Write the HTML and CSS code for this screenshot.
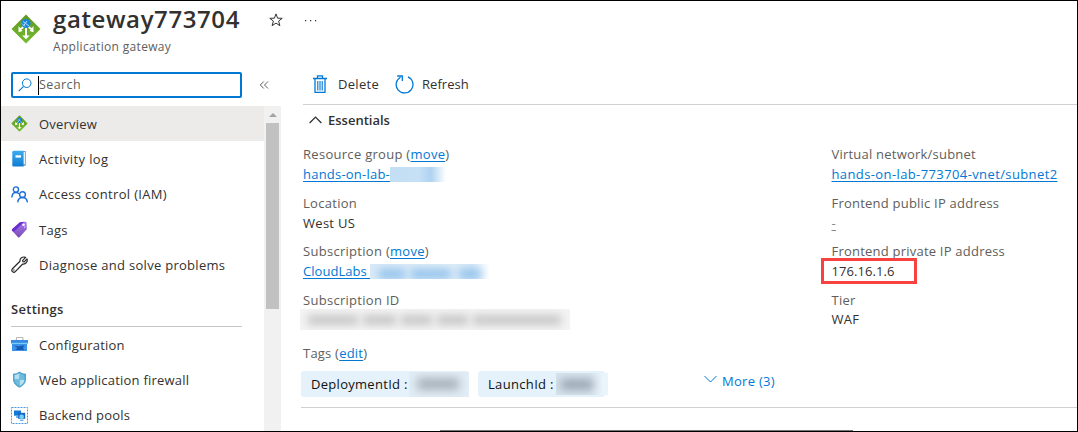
FILE: index.html
```html
<!DOCTYPE html>
<html lang="en">
<head>
<meta charset="utf-8">
<title>gateway773704 - Application gateway</title>
<link rel="stylesheet" href="styles.css">
</head>
<body>
<svg class="defs" width="0" height="0" aria-hidden="true">
  <defs>
    <linearGradient id="g-green" x1="0" y1="0" x2="0" y2="1"><stop offset="0" stop-color="#5e9624"/><stop offset="1" stop-color="#76bc2d"/></linearGradient>
    <linearGradient id="g-blue" x1="0" y1="0" x2="0" y2="1"><stop offset="0" stop-color="#3cabee"/><stop offset="1" stop-color="#0f7bd4"/></linearGradient>
    <linearGradient id="g-purple" x1="0" y1="0" x2="0" y2="1"><stop offset="0" stop-color="#a67af4"/><stop offset="1" stop-color="#7a4bb0"/></linearGradient>
    <symbol id="gateway" viewBox="0 0 30 30">
      <path d="M15 .5 29.500 15 15 29.500 .5 15Z" fill="url(#g-green)"/>
      <path d="M14 12h2v9.500h2.800L15 25.300l-3.800-3.800H14Z" fill="#fff"/>
      <path d="M12.500 12.500q-1.200 2.200-4 2.900M17.500 12.500q1.200 2.200 4 2.900" fill="none" stroke="#fff" stroke-width="1.700"/>
      <path d="M7.500 12v6.200l4-1.300ZM22.500 12v6.200l-4-1.300Z" fill="#fff"/>
      <circle cx="15" cy="9.500" r="4.600" fill="#1683dc"/>
      <path d="m12 7.500 6 4.500M12.500 12l3.500-5M11 9.500l3 3" stroke="#b8e1fc" stroke-width="1"/>
    </symbol>
  </defs>
</svg>
<div class="window">
  <header class="header">
    <svg class="header-icon"><use href="#gateway"/></svg>
    <div class="heading">
      <h1 class="title">gateway773704</h1>
      <p class="subtitle">Application gateway</p>
    </div>
    <svg class="star" viewBox="0 0 14 14"><path d="m7 .9 1.600 4.300 4.600.1-3.600 2.800 1.300 4.600L7 10.100l-3.900 2.600 1.300-4.600L.8 5.300l4.600-.1Z" fill="none" stroke="#323130"/></svg>
    <svg class="dots" viewBox="0 0 13 3"><path d="M1 1h1.200v1.200H1ZM6 1h1.200v1.200H6ZM11 1h1.200v1.200H11Z" fill="#323130"/></svg>
  </header>
  <div class="body">
    <aside class="sidebar">
      <div class="search-row">
        <div class="search">
          <svg class="search-icon" viewBox="0 0 14 14"><circle cx="8.700" cy="5.200" r="4.300" fill="none" stroke="#0078d4"/><path d="M5.600 8.300.7 13.200" stroke="#0078d4" stroke-width="1.100"/></svg>
          <span class="caret"></span><span class="placeholder">Search</span>
        </div>
        <svg class="collapse" viewBox="0 0 10 8"><path d="M4.800.5 1.300 4l3.500 3.500M9 .5 5.500 4 9 7.500" fill="none" stroke="#605e5c"/></svg>
      </div>
      <div class="nav-wrap">
        <nav class="nav">
          <a class="item active"><svg class="icon" viewBox="0 0 17 17"><use href="#gateway"/></svg><span class="ls-2">Overview</span></a>
          <a class="item"><svg class="icon" viewBox="0 0 17 17"><path d="M2.500 1h12v14.500h-12Z" fill="#155ea8"/><path d="M4 1.400h10v13.200H3Z" fill="#e8f3fb"/><path d="M1.300 2.200Q1.300.8 2.800.8h9.800v15.800H2.300q-1 0-1-1Z" fill="url(#g-blue)"/><path d="M4.500 5.300h5.500V7.600H4.500Z" fill="#fff"/></svg><span class="ls-4">Activity log</span></a>
          <a class="item"><svg class="icon" viewBox="0 0 17 17" fill="none" stroke="#1b6dda" stroke-width="1.400"><circle cx="4.900" cy="3.500" r="2.600"/><path d="M.9 11.500c.1-3 1.600-5 4-5 1.400 0 2.500.5 3.100 1.500"/><circle cx="11.500" cy="8.600" r="2.900"/><path d="M6.700 16.400c.3-3.100 2-4.900 4.800-4.900s4.600 1.800 4.900 4.900"/></svg><span class="ls-3">Access control (IAM)</span></a>
          <a class="item"><svg class="icon" viewBox="0 0 17 17"><path d="M1 8.200 8.800 1.300l5.400-.6q1.300 0 1.400 1.300l.2 6.200-7.300 8.100q-.7.500-1.400-.1L1.300 10q-.7-.9-.3-1.800Z" fill="url(#g-purple)"/><path d="m1 8.200 8-7 4.300-.5-9.800 9.500-1.500.4Q.3 9.300 1 8.200Z" fill="#6b2fd0"/><circle cx="12.500" cy="3.700" r="1.300" fill="#fff"/><path d="M13 4q1.800 1.500.3 3" fill="none" stroke="#d6bff7"/></svg><span>Tags</span></a>
          <a class="item"><svg class="icon" viewBox="0 0 17 17"><path d="M14.600 1.400 11.700 4.300l.2 1.300 1.300.2 2.800-2.900c1 2.900-1.300 5.600-4.300 5.100L4.300 15.600c-1.800 1.800-4.700-.9-2.900-2.800L9 5.300C8.500 2.300 11.500.1 14.600 1.400Z" fill="none" stroke="#2b2a29" stroke-width="1.200" stroke-linejoin="round"/><circle cx="2.900" cy="14" r=".7" fill="#323130"/></svg><span>Diagnose and solve problems</span></a>
          <h2 class="group">Settings</h2>
          <a class="item"><svg class="icon" viewBox="0 0 17 17"><path d="M5.500 4.500V2.200q0-.7.7-.7h5q.7 0 .7.700v2.300" fill="none" stroke="#b9b9b9" stroke-width="1.200"/><path d="M0 4h17v4H0Z" fill="#3789e5"/><path d="M1 8h15v7H1Z" fill="#3d92ea"/><path d="M0 6.800h17V8H0Z" fill="#78cef7"/><path d="m3 9.500 3.500.8H9l2-.8h2.500l-1.500 2 1 2.500H4l2.500-2Z" fill="#155cb2"/></svg><span class="ls-2">Configuration</span></a>
          <a class="item"><svg class="icon" viewBox="0 0 17 17"><path d="M8.500.5c2 1.600 4 2.100 6.500 2.200v5.300c0 4.200-3.100 7-6.500 8.700C5.100 15 2 12.200 2 8V2.700C4.500 2.600 6.500 2.100 8.500.5Z" fill="#48a4cf"/><path d="M8.500 2v6.500h-5v-4.600C5.500 3.700 7 3.200 8.500 2ZM8.500 8.500h5c0 3.200-2.300 5.300-5 6.700Z" fill="#b6dff0"/><path d="M8.500 2c1.500 1.200 3 1.700 5 1.900v4.600h-5ZM3.500 8.500h5v6.700c-2.700-1.400-5-3.500-5-6.700Z" fill="#6dbbdd"/></svg><span class="ls-2">Web application firewall</span></a>
          <a class="item"><svg class="icon" viewBox="0 0 17 17"><path d="M.5.500h16v16H.5Z" fill="none" stroke="#4898dd" stroke-dasharray="2 1"/><path d="M3 3.500h7v5.200H3Z" fill="#1479d5"/><path d="M5 9h3v2H5Z" fill="#74b4e8"/><path d="M7.200 5.800h7v6h-7Z" fill="#1368c5"/><path d="m10.600 7.200 2.200 1.300v2.600l-2.200 1.300-2.200-1.300V8.500Z" fill="#78cff5"/><path d="M9 12.600h3.500v1.200H9Z" fill="#4fa3e3"/></svg><span class="ls-2">Backend pools</span></a>
        </nav>
        <div class="scrollbar"><span class="arrow"></span><span class="thumb"></span></div>
      </div>
    </aside>
    <main class="main">
      <div class="toolbar">
        <svg class="trash" viewBox="0 0 14 18"><path d="M2 4v13.300h10V4M0 3.500h14M4.500 3V.9h5V3" fill="none" stroke="#0078d4" stroke-width="1.300"/><path d="M4 6h6v9.500H4Z" fill="#c5e0f5"/><path d="M4.700 6v9.500M7 6v9.500M9.300 6v9.500" stroke="#2388d9"/></svg>
        <span>Delete</span>
        <svg class="refresh" viewBox="0 0 19 19"><path d="M13 1.900A8.400 8.400 0 1 1 5.500 2.200M2.200 1h5.100v5.100" fill="none" stroke="#0078d4" stroke-width="1.300"/></svg>
        <span class="ls-0">Refresh</span>
      </div>
      <div class="essentials">
        <svg class="chev" viewBox="0 0 13 8"><path d="m.6 7 5.900-5.900L12.400 7" fill="none" stroke="#323130" stroke-width="1.300"/></svg>
        <span>Essentials</span>
      </div>
      <div class="columns">
        <dl class="col">
          <div class="field"><dt>Resource group (<a>move</a>)</dt><dd><a class="ls-2">hands-on-lab-</a><span class="blur blur-rg"></span></dd></div>
          <div class="field"><dt>Location</dt><dd><span>West US</span></dd></div>
          <div class="field"><dt>Subscription (<a>move</a>)</dt><dd><a class="ls-0">CloudLabs&nbsp;</a><span class="blur blur-sub"><i></i><i></i><i></i></span></dd></div>
          <div class="field"><dt>Subscription ID</dt><dd><span class="blur blur-id"><i></i><i></i><i></i><i></i><i></i></span></dd></div>
        </dl>
        <dl class="col">
          <div class="field"><dt class="ls-2">Virtual network/subnet</dt><dd><a class="ls-4">hands-on-lab-773704-vnet/subnet2</a></dd></div>
          <div class="field"><dt class="ls-2">Frontend public IP address</dt><dd><a class="none">-</a></dd></div>
          <div class="field"><dt class="ls-2">Frontend private IP address</dt><dd class="marked"><span class="ls-1">176.16.1.6</span></dd></div>
          <div class="field"><dt>Tier</dt><dd class="tier"><span>WAF</span></dd></div>
        </dl>
      </div>
      <div class="tags-label ls-2">Tags (<a>edit</a>)</div>
      <div class="tags">
        <span class="chip chip-a"><span>DeploymentId :</span><span class="blur blur-a"><i></i></span></span>
        <span class="chip chip-b"><span class="ls-3">LaunchId :</span><span class="blur blur-b"><i></i></span></span>
        <a class="more"><svg viewBox="0 0 13 8"><path d="m.5 1 6 6 6-6" fill="none" stroke="#0078d4"/></svg><span>More (3)</span></a>
      </div>
      <div class="bottom-bar"></div>
    </main>
  </div>
</div>
</body>
</html>
```
FILE: styles.css
```css
* { box-sizing: border-box; }
body { margin: 0; font: 13px/20px "Open Sans", "Noto Sans", sans-serif; letter-spacing: .290px; color: #323130; background: #fff; }
h1, h2, p, dl, dt, dd { margin: 0; font-size: inherit; }
svg { display: block; flex: none; }
.defs { position: absolute; }
.window { width: 1078px; height: 432px; border: 1px solid #000; overflow: hidden; display: flex; flex-direction: column; }
span, a { white-space: nowrap; }
.ls-0 { letter-spacing: .050px; }
.ls-1 { letter-spacing: .060px; }
.ls-2 { letter-spacing: .220px; }
.ls-3 { letter-spacing: .330px; }
.ls-4 { letter-spacing: .390px; }

.header { height: 65px; flex: none; display: flex; align-items: flex-start; padding-left: 10px; }
.header-icon { width: 30px; height: 30px; margin-top: 13px; }
.heading { width: 187px; margin-left: 12px; }
.title { font-size: 24px; line-height: 30px; font-weight: 600; letter-spacing: .600px; margin-top: 3px; color: #323130; white-space: nowrap; }
.subtitle { font-size: 12px; line-height: 18px; letter-spacing: .330px; margin-top: 4px; color: #605e5c; white-space: nowrap; }
.star { width: 14px; height: 14px; margin: 12px 0 0 28.500px; }
.dots { width: 13px; height: 3px; margin: 18px 0 0 21.500px; }

.body { flex: 1; min-height: 0; display: flex; }
.sidebar { width: 280px; flex: none; display: flex; flex-direction: column; }
.search-row { height: 40px; flex: none; display: flex; align-items: flex-start; padding: 6px 0 0 10px; }
.search { width: 231px; height: 26px; border: 2px solid #0078d4; border-radius: 2px; display: flex; align-items: center; padding-left: 5px; }
.search-icon { width: 14px; height: 14px; }
.caret { width: 1px; height: 19px; background: #000; margin-left: 6px; }
.placeholder { color: #605e5c; font-size: 12.500px; letter-spacing: .400px; }
.collapse { width: 10px; height: 8px; margin: 9px 0 0 17px; }

.nav-wrap { flex: 1; min-height: 0; display: flex; }
.nav { width: 263px; overflow: hidden; }
.item { height: 35.300px; display: flex; align-items: center; padding-left: 10px; gap: 11px; }
.item.active { background: #edebe9; }
.icon { width: 17px; height: 17px; }
.group { height: 44.500px; margin: 0 22px 0 10px; padding-top: 16.500px; border-bottom: 1px solid #c8c6c4; font-weight: 600; }
.scrollbar { width: 17px; background: #f1f1f1; display: flex; flex-direction: column; align-items: center; }
.arrow { border: 4px solid transparent; border-top: 0; border-bottom-color: #a3a3a3; margin-top: 7px; }
.thumb { width: 13px; height: 186px; background: #c1c1c1; margin-top: 6px; }

.main { flex: 1; min-width: 0; padding-left: 22px; display: flex; flex-direction: column; }
.toolbar { height: 39px; flex: none; display: flex; align-items: center; border-bottom: 1px solid #d2d0ce; padding: 0 0 2px 10px; }
.trash { width: 14px; height: 18px; margin-right: 11px; }
.refresh { width: 19px; height: 19px; margin: 0 8px 0 16px; }
.essentials { height: 31px; flex: none; display: flex; align-items: center; gap: 6px; padding: 0 0 1px 6px; font-weight: 600; letter-spacing: 0; }
.chev { width: 13px; height: 8px; }
.columns { display: flex; height: 207px; flex: none; padding-top: 8px; }
.col { width: 528.500px; flex: none; }
.field { height: 48.500px; }
dt, .tags-label { color: #605e5c; line-height: 20px; height: 20px; }
dd { display: flex; height: 20px; align-items: center; }
a { color: inherit; }
dt a, dd a, .tags-label a { color: #0078d4; text-decoration: underline; text-underline-offset: 2px; }
dd a.none { color: #8a8886; }
.tier { height: 18px; }
.marked { width: 96px; height: 26px; margin: -3px 0 0 -11px; padding-left: 8px; border: 3px solid #f7423f; position: relative; z-index: 1; }
.tags-label { flex: none; }

.blur { display: flex; flex: none; align-items: center; overflow: hidden; }
.blur i { display: block; flex: none; height: 8px; filter: blur(4px); }
.blur-rg { width: 57px; height: 15px; background: linear-gradient(90deg, #c3dff3, #c6e0f5 50%, #afd3f1 72%, #fff 98%); }
.blur-sub { width: 120px; height: 15px; gap: 6px; background: linear-gradient(90deg, #d7e9f8, #e1eff9 65%, #d6e9f7 85%, #fff); }
.blur-sub i { height: 10px; background: #93c2ec; width: 26px; margin-top: 6px; }
.blur-sub i:nth-child(1) { margin-left: 9px; }
.blur-sub i:nth-child(2) { width: 40px; }
.blur-sub i:nth-child(3) { width: 22px; margin-left: 2px; }
.blur-id { width: 270px; height: 21px; margin-left: -3px; padding-left: 8px; gap: 5px; background: #f4f4f4; }
.blur-id i { background: #c6c6c6; width: 50px; height: 10px; }
.blur-id i:nth-child(2) { width: 33px; }
.blur-id i:nth-child(3), .blur-id i:nth-child(4) { width: 31px; }
.blur-id i:nth-child(5) { width: 88px; }

.tags { flex: none; display: flex; height: 45px; padding-top: 8px; margin-left: -2px; border-bottom: 1px solid #d2d0ce; }
.chip { height: 26px; flex: none; background: #e5f1fb; border-radius: 3px; display: flex; align-items: center; color: #111; padding-left: 10px; }
.chip-a { width: 168px; }
.chip-b { width: 127px; margin-left: 9px; }
.blur-a { width: 60px; height: 25px; margin-left: auto; padding-left: 8px; background: #e2edf6; }
.blur-b { width: 52px; height: 22px; margin: 0 -3px 0 auto; padding-left: 5px; background: linear-gradient(90deg, #d6e3ed, #d7e4ef 65%, #eaf4fb 90%); }
.blur-a i { background: #a7b1ba; width: 42px; height: 12px; filter: blur(5px); }
.blur-b i { background: #909ba5; width: 32px; height: 9px; filter: blur(5px); }
.more { display: flex; height: 20px; align-items: center; color: #0078d4; margin: 0 0 0 99px; gap: 5px; }
.more svg { width: 13px; height: 8px; margin-top: -4px; }
.bottom-bar { flex: none; margin: 22px 0 0 137px; width: 413px; height: 1px; background: #767676; }
```
